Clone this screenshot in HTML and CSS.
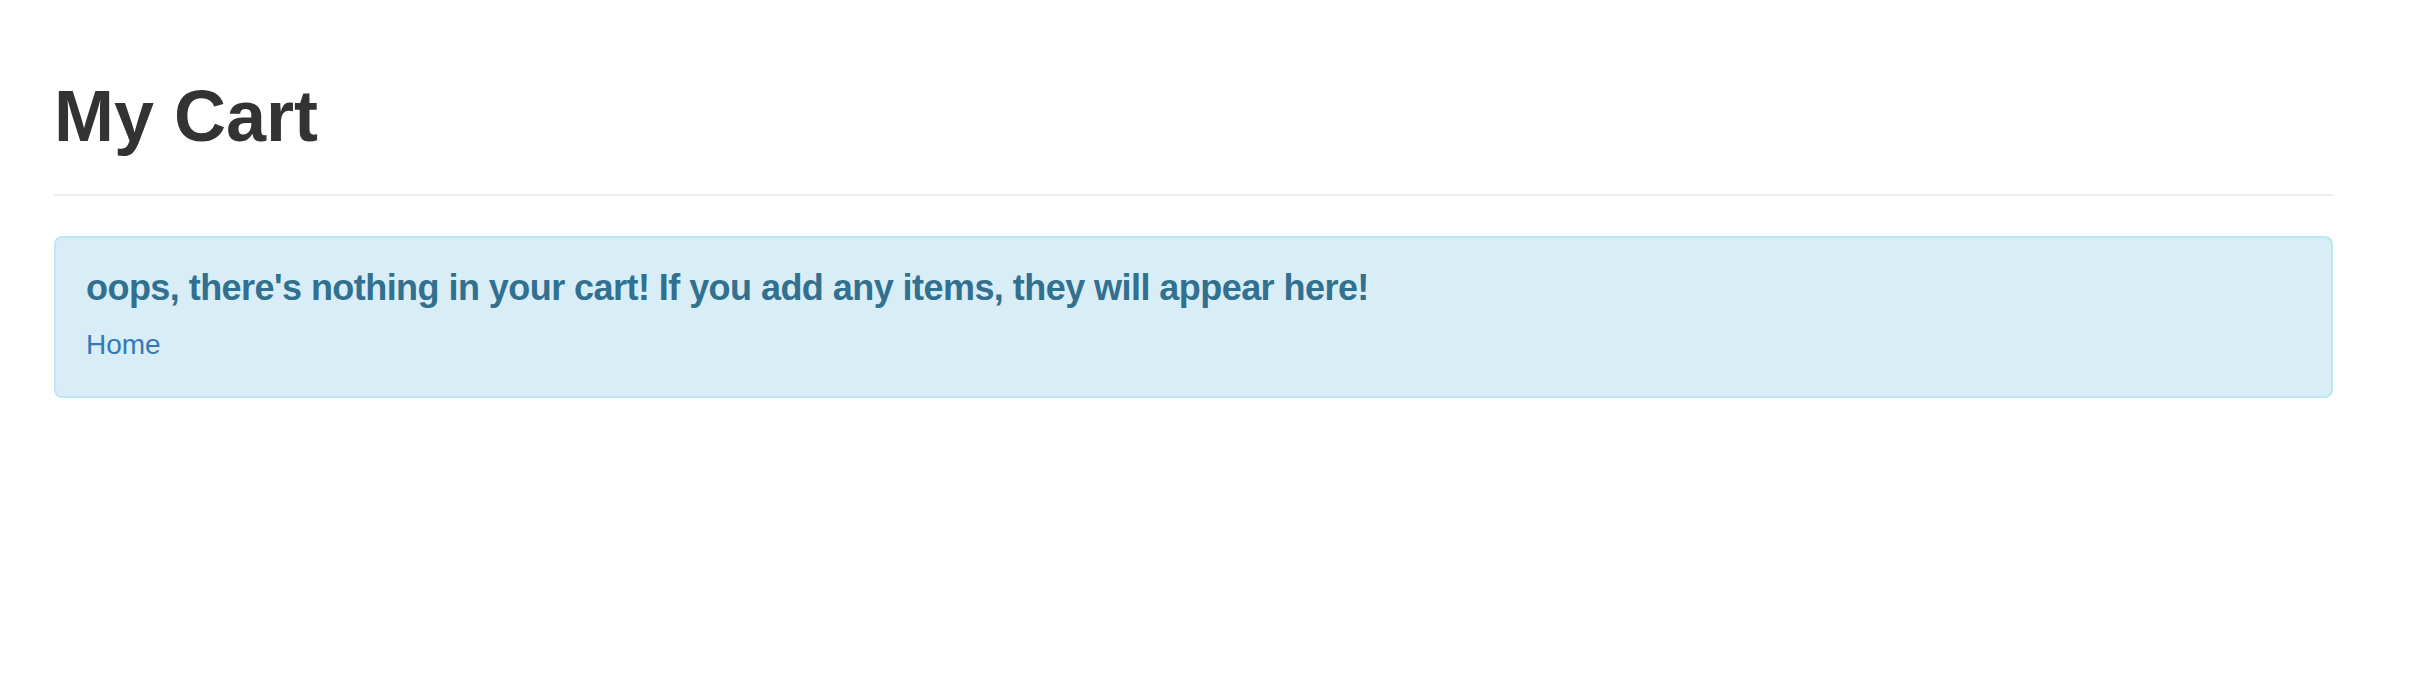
FILE: index.html
```html
<!DOCTYPE html>
<html>
<head>
<meta charset="utf-8">
<title>My Cart</title>
<link rel="stylesheet" href="styles.css">
</head>
<body>
<div class="container">
  <div class="page-header">
    <h1 class="title">My Cart</h1>
  </div>
  <div class="alert">
    <h4 class="alert-heading">oops, there's nothing in your cart! If you add any items, they will appear here!</h4>
    <a class="home-link" href="#">Home</a>
  </div>
</div>
</body>
</html>
```

FILE: styles.css
```css
html, body {
  margin: 0;
  padding: 0;
  background: #fff;
}
body {
  font-family: "Liberation Sans", Arial, sans-serif;
  color: #333;
  font-size: 28px;
  line-height: 1.42857;
}
.container {
  padding: 37px 97px 0 54px;
}
.page-header {
  margin: 40px 0 40px;
  padding-bottom: 18px;
  border-bottom: 2px solid #eee;
}
.title {
  margin: 40px 0 20px;
  font-size: 72px;
  font-weight: bold;
  line-height: 1.1;
  color: #333;
}
.alert {
  background: #d9edf7;
  border: 2px solid #bce8f1;
  border-radius: 8px;
  padding: 30px 30px 31px;
  color: #31708f;
}
.alert-heading {
  margin: 0 0 17px;
  font-size: 36px;
  font-weight: bold;
  line-height: 1.1;
  letter-spacing: -0.55px;
  color: #31708f;
}
.home-link {
  color: #337ab7;
  text-decoration: none;
  font-size: 28px;
}
```
